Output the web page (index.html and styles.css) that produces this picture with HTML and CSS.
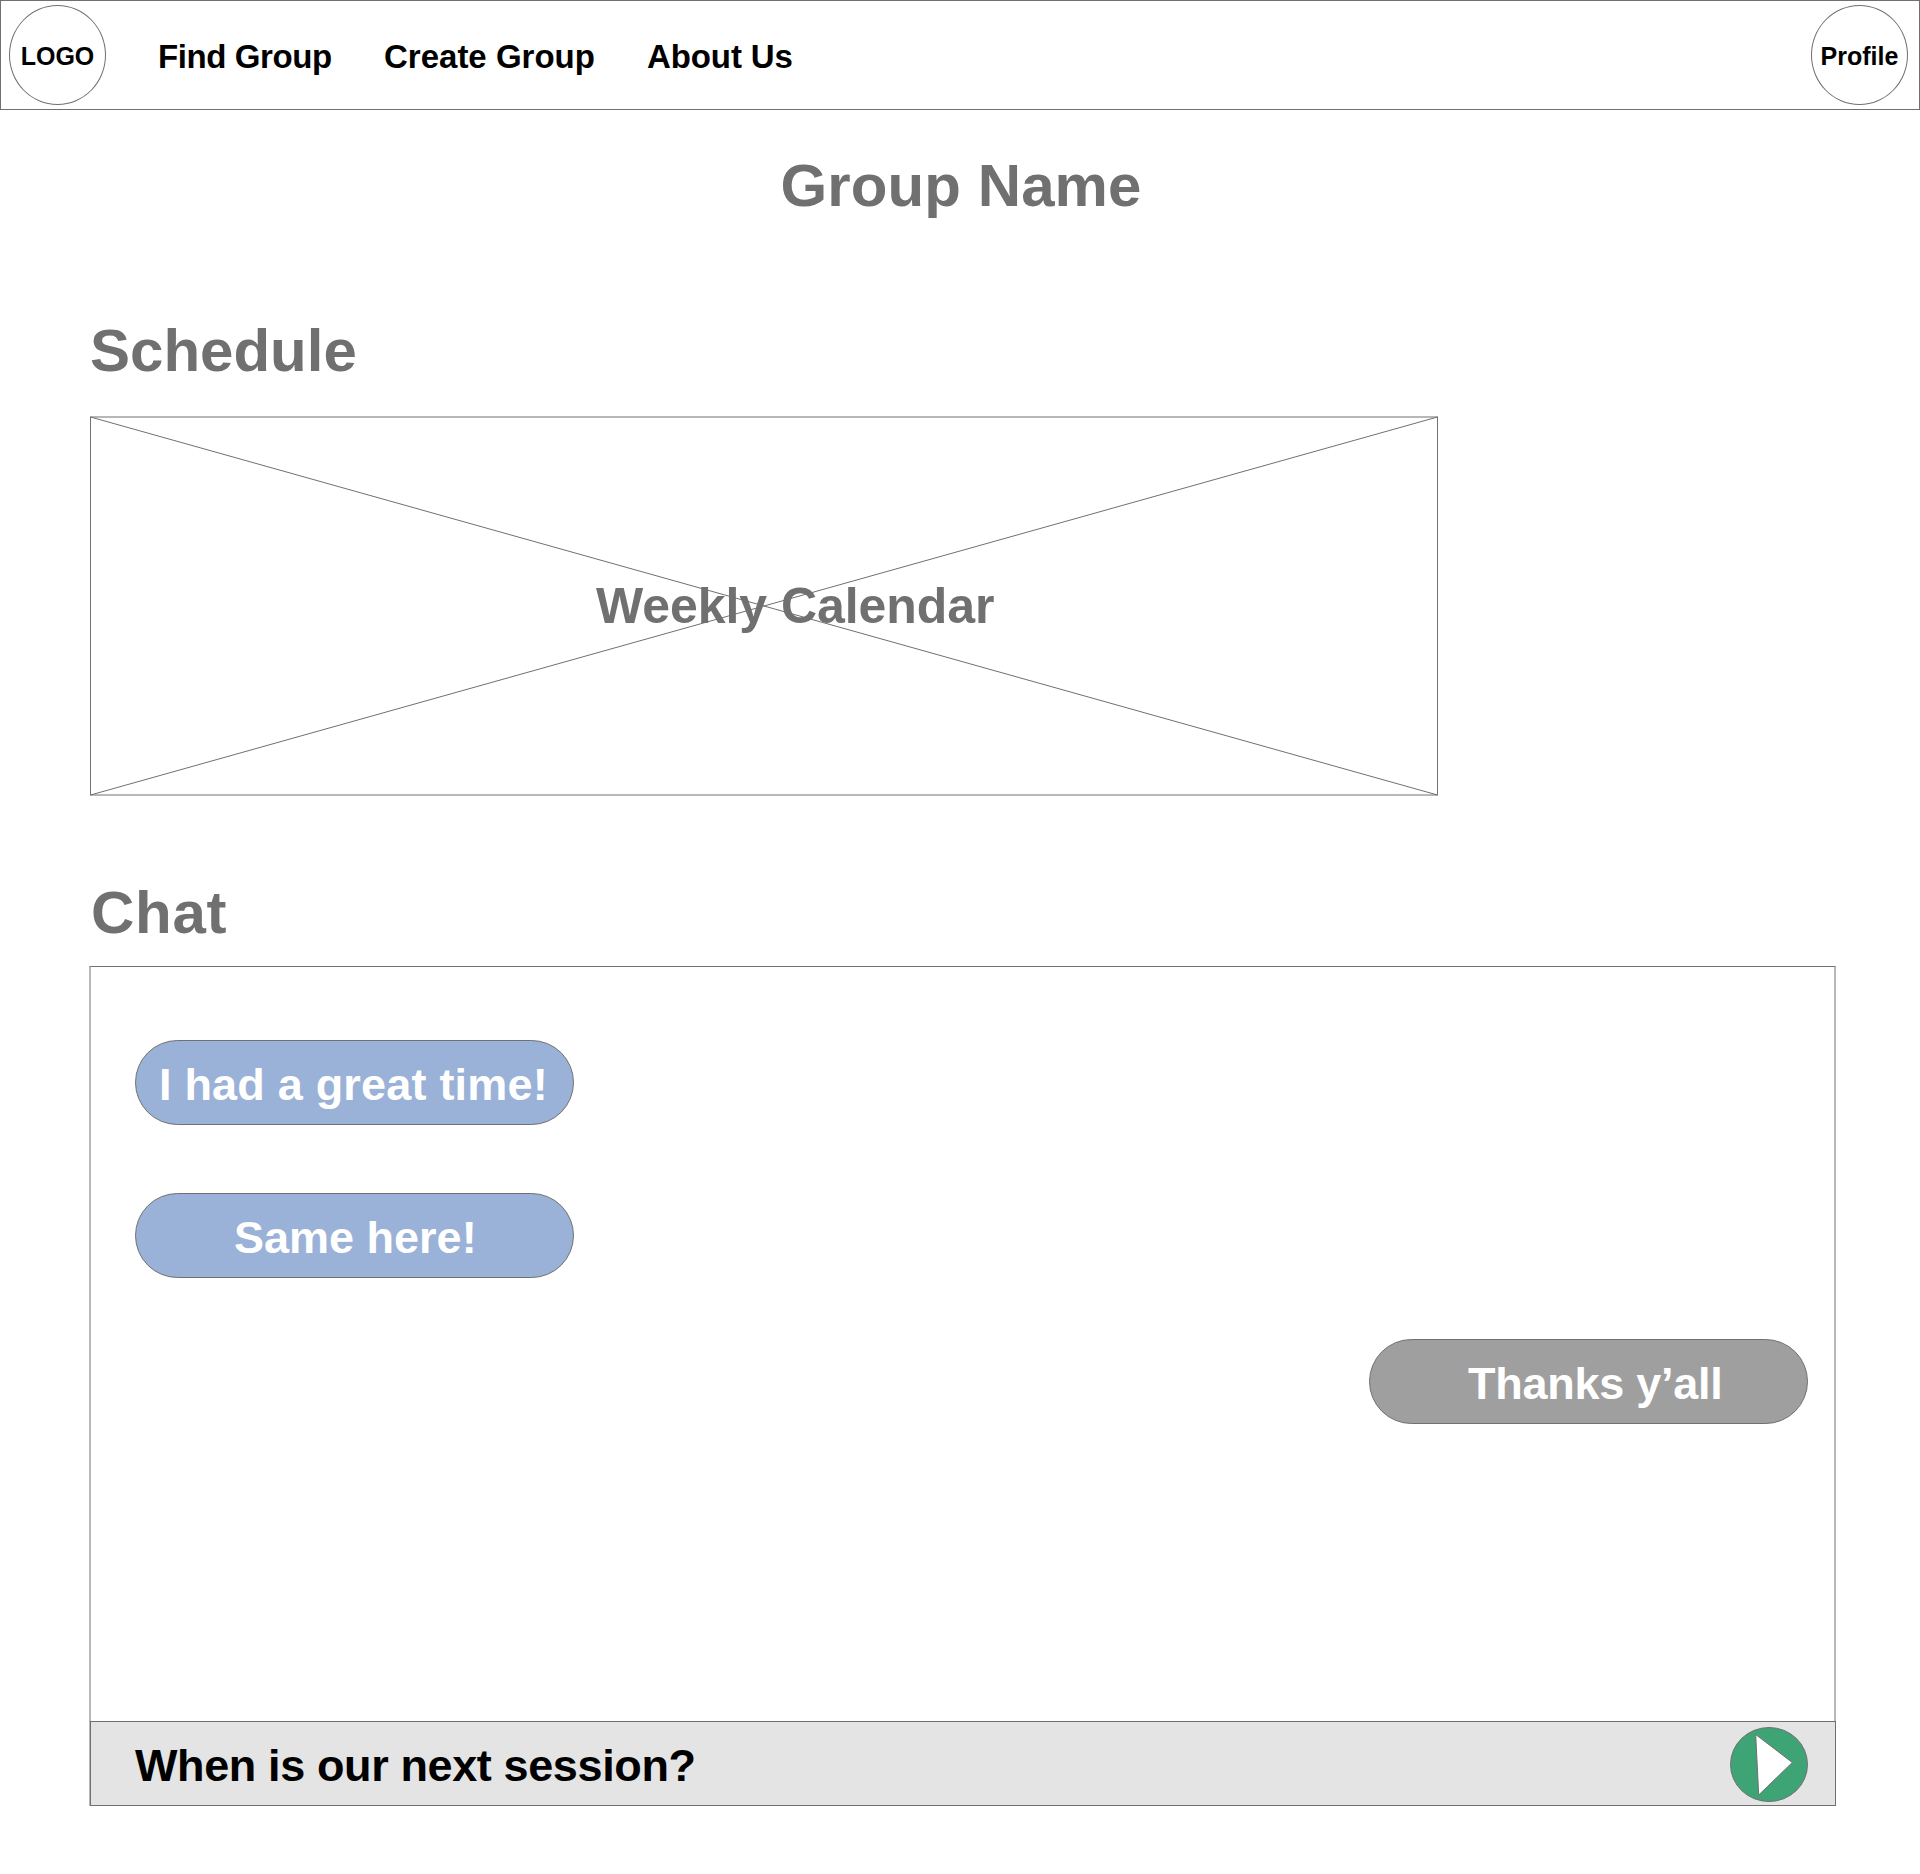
FILE: index.html
```html
<!DOCTYPE html>
<html lang="en">
<head>
<meta charset="utf-8">
<title>Group Name</title>
<link rel="stylesheet" href="styles.css">
</head>
<body>
<header class="topbar">
  <div class="round logo">LOGO</div>
  <nav class="nav">
    <a class="nav-find">Find Group</a>
    <a class="nav-create">Create Group</a>
    <a class="nav-about">About Us</a>
  </nav>
  <div class="round profile">Profile</div>
</header>
<main class="page">
  <h1 class="title">Group Name</h1>
  <section class="schedule">
    <h2 class="heading">Schedule</h2>
    <div class="calendar">
      <svg class="cross" width="1349" height="380" viewBox="0 0 1349 380" fill="none" stroke="#707070">
        <rect x="0.5" y="1" width="1347" height="378"/>
        <path d="M0.5 1L1347.5 379M1347.5 1L0.5 379"/>
      </svg>
      <span class="calendar-label">Weekly Calendar</span>
    </div>
  </section>
  <section class="chat">
    <h2 class="heading heading-chat">Chat</h2>
    <div class="chat-box">
      <div class="messages">
        <div class="bubble"><span class="msg-great">I had a great time!</span></div>
        <div class="bubble second"><span class="msg-same">Same here!</span></div>
        <div class="bubble own"><span class="msg-thanks">Thanks y’all</span></div>
      </div>
      <div class="composer">
        <span class="draft">When is our next session?</span>
        <svg class="send" width="78" height="75" viewBox="0 0 78 75" stroke="#707070">
          <ellipse cx="39" cy="37.5" rx="38.5" ry="37" fill="#3ea475"/>
          <path d="M25.7 7.5L62.3 35.5L28.7 68Z" fill="#fff"/>
        </svg>
      </div>
    </div>
  </section>
</main>
</body>
</html>
```
FILE: styles.css
```css
* { box-sizing: border-box; }
body {
  margin: 0;
  background: #fff;
  font-family: "Liberation Sans", Arial, sans-serif;
  font-weight: bold;
  color: #000;
}
.topbar {
  display: flex;
  align-items: center;
  height: 110px;
  padding: 0 11px 0 8px;
  border: 1px solid #707070;
}
.round {
  display: flex;
  align-items: center;
  justify-content: center;
  width: 97px;
  height: 100px;
  padding-top: 3px;
  border: 1px solid #707070;
  border-radius: 50%;
  font-size: 25px;
}
.nav {
  display: flex;
  flex: 1;
  padding: 3px 0 0 52px;
  font-size: 33px;
  white-space: nowrap;
}
.nav-find { width: 226px; letter-spacing: -0.4px; }
.nav-create { width: 263px; }
.nav-about { letter-spacing: -0.1px; }
.page { padding: 46px 84px 68px 89px; }
.title, .heading {
  margin: 0;
  font-size: 60px;
  line-height: 60px;
  color: #707070;
}
.title { padding-right: 3px; text-align: center; letter-spacing: 0.1px; }
.schedule { margin-top: 105px; padding-left: 1px; }
.calendar {
  display: grid;
  width: 1349px;
  height: 380px;
  margin-top: 35px;
}
.cross, .calendar-label { grid-area: 1 / 1; }
.calendar-label {
  align-self: center;
  padding-left: 506px;
  font-size: 50px;
  line-height: 50px;
  letter-spacing: -0.05px;
  color: #707070;
}
.chat { margin-top: 87px; }
.heading-chat { padding-left: 2px; letter-spacing: 0.7px; }
.chat-box {
  display: flex;
  flex-direction: column;
  width: 1747px;
  height: 840px;
  margin-top: 23px;
  border: solid #b7b7b7;
  border-width: 1px 2px 0;
  border-top-color: #707070;
}
.messages {
  display: flex;
  flex: 1;
  flex-direction: column;
  align-items: flex-start;
  padding: 73px 26px 0 44px;
}
.bubble {
  display: flex;
  align-items: center;
  width: 439px;
  height: 85px;
  padding-top: 4px;
  border: 1px solid #707070;
  border-radius: 43px;
  background: #9ab2d7;
  color: #fff;
  font-size: 45px;
  white-space: nowrap;
}
.second { margin-top: 68px; }
.own { align-self: flex-end; margin-top: 61px; background: #9f9f9f; }
.msg-great { padding-left: 23px; letter-spacing: 0.2px; }
.msg-same { padding-left: 98px; }
.msg-thanks { padding-left: 98px; letter-spacing: -0.25px; }
.composer {
  display: flex;
  align-items: center;
  justify-content: space-between;
  height: 85px;
  margin: 0 -2px 0 -1px;
  padding: 0 27px 0 44px;
  border: 1px solid #707070;
  background: #e4e4e4;
}
.draft { padding-top: 4px; font-size: 45px; letter-spacing: -0.38px; }
.send { margin-top: 2px; }
```
